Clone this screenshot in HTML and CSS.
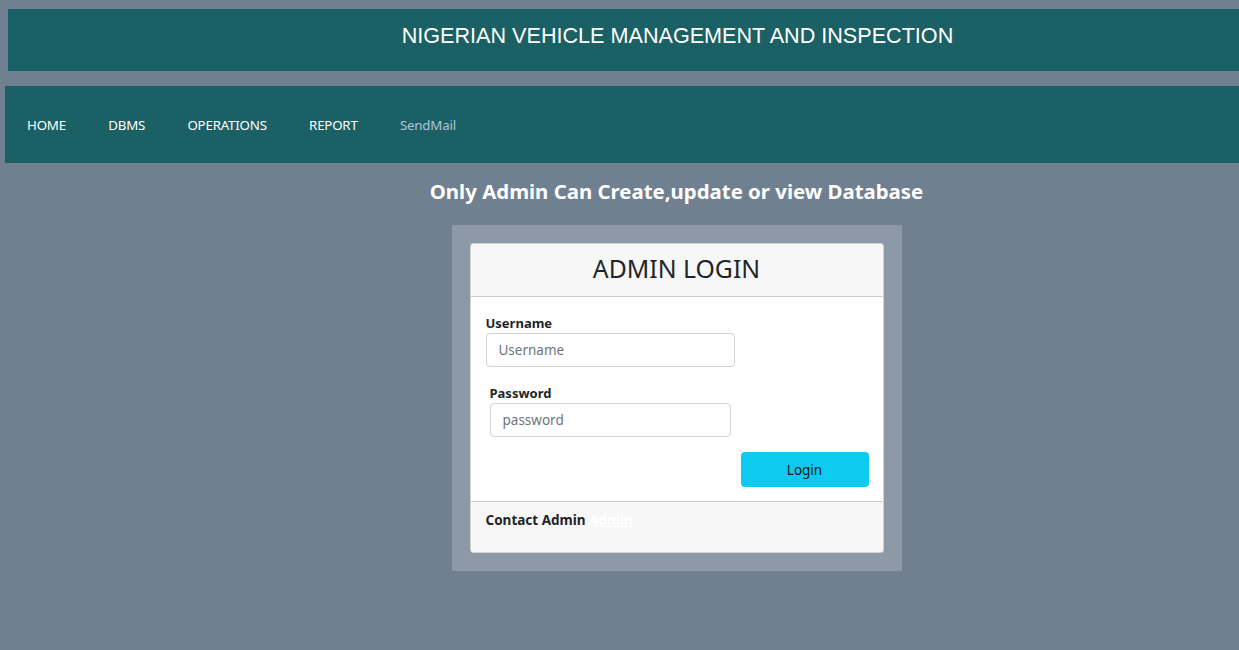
FILE: index.html
```html
<!DOCTYPE html>
<html>
<head>
<meta charset="utf-8">
<link rel="stylesheet" href="styles.css">
</head>
<body>
<header class="topbar">
  <h1 class="title">NIGERIAN VEHICLE MANAGEMENT AND INSPECTION</h1>
</header>
<nav class="navbar">
  <a class="nav-link" href="#">HOME</a>
  <a class="nav-link" href="#">DBMS</a>
  <a class="nav-link" href="#">OPERATIONS</a>
  <a class="nav-link" href="#">REPORT</a>
  <a class="nav-link nav-muted" href="#">SendMail</a>
</nav>
<main class="main">
  <h2 class="notice">Only Admin Can Create,update or view Database</h2>
  <div class="frame">
    <div class="card">
      <div class="card-header">ADMIN LOGIN</div>
      <div class="card-body">
        <div class="field">
          <label class="label">Username</label>
          <input class="input input-user" type="text" placeholder="Username">
        </div>
        <div class="field field-pass">
          <label class="label">Password</label>
          <input class="input input-pass" type="password" placeholder="password">
        </div>
        <div class="actions">
          <button class="btn">Login</button>
        </div>
      </div>
      <div class="card-footer">
        <span class="contact">Contact Admin <a class="admin-link" href="#">Admin</a></span>
      </div>
    </div>
  </div>
</main>
</body>
</html>
```

FILE: styles.css
```css
html, body {
  margin: 0;
  padding: 0;
}
body {
  background: #708090;
  padding: 9px 0 0 8px;
  overflow: hidden;
  height: 650px;
  box-sizing: border-box;
  font-family: "Noto Sans", "Open Sans", sans-serif;
}
.topbar {
  background: #1b6064;
  height: 62px;
  display: flex;
  align-items: center;
  justify-content: center;
  padding-left: 108px;
}
.title {
  margin: 0;
  font-family: "Liberation Sans", Arial, sans-serif;
  font-weight: normal;
  font-size: 21.6px;
  color: #fff;
  position: relative;
  top: -4px;
}
.navbar {
  margin: 15px 0 0 -3px;
  background: #1b6064;
  height: 77px;
  display: flex;
  align-items: center;
  padding-left: 22px;
}
.nav-link {
  color: #fff;
  text-decoration: none;
  font-size: 13.3px;
  margin-right: 42.3px;
  letter-spacing: -0.2px;
}
.nav-muted {
  color: #b0c4de;
}
.main {
  display: flex;
  flex-direction: column;
  align-items: center;
  padding-left: 106px;
}
.notice {
  margin: 14px 0 0 0;
  font-size: 20.4px;
  font-weight: bold;
  color: #fff;
  line-height: 28px;
}
.frame {
  margin-top: 20px;
  background: #8d99a6;
  padding: 18px;
}
.card {
  width: 414px;
  background: #fff;
  border: 1px solid rgba(0,0,0,0.176);
  border-radius: 4px;
  box-sizing: border-box;
  overflow: hidden;
}
.card-header {
  background: #f7f7f7;
  border-bottom: 1px solid rgba(0,0,0,0.176);
  height: 53px;
  box-sizing: border-box;
  padding-bottom: 4px;
  display: flex;
  align-items: center;
  justify-content: center;
  font-size: 24.8px;
  color: #212529;
}
.card-body {
  padding: 18px 14px 14px 15px;
}
.field {
  display: flex;
  flex-direction: column;
}
.field-pass {
  margin-top: 18px;
  padding-left: 4px;
}
.label {
  font-weight: bold;
  font-size: 13px;
  color: #212529;
  line-height: 16px;
  margin-bottom: 2px;
}
.input {
  height: 34px;
  box-sizing: border-box;
  border: 1px solid #ced4da;
  border-radius: 4px;
  padding: 0 12px;
  font-family: "Noto Sans", "Open Sans", sans-serif;
  font-size: 13.5px;
  color: #212529;
}
.input::placeholder {
  color: #6c757d;
}
.input-user {
  width: 249px;
}
.input-pass {
  width: 241px;
}
.actions {
  display: flex;
  justify-content: flex-end;
  margin-top: 15px;
}
.btn {
  width: 128px;
  height: 35px;
  background: #0dcaf0;
  border: none;
  border-radius: 4px;
  color: #0a1a10;
  font-family: "Noto Sans", "Open Sans", sans-serif;
  font-size: 13.5px;
}
.card-footer {
  background: #f7f7f7;
  border-top: 1px solid rgba(0,0,0,0.176);
  height: 51px;
  padding: 6px 15px 0 15px;
  box-sizing: border-box;
}
.contact {
  font-weight: bold;
  font-size: 13.5px;
  color: #212529;
}
.admin-link {
  color: #fff;
  text-decoration: underline;
}
```
